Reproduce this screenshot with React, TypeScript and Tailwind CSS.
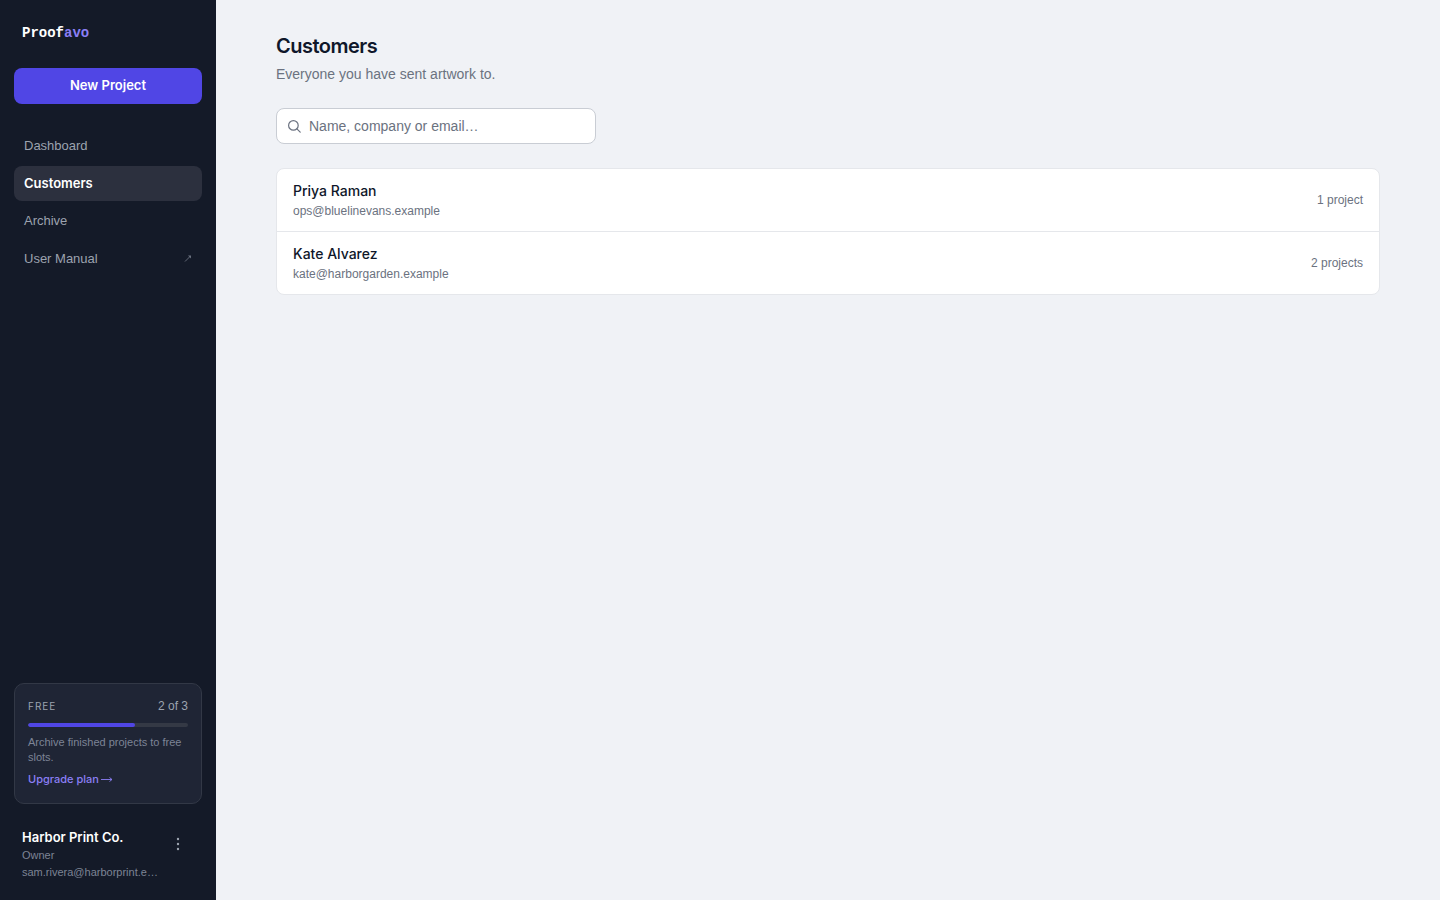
import { useState } from "react";
import clsx from "clsx";

const navItems = [
    { label: "Dashboard", href: "#dashboard" },
    { label: "Customers", href: "#customers", active: true },
    { label: "Archive", href: "#archive" },
    { label: "User Manual", href: "#manual", external: true },
];

const customers = [
    { name: "Priya Raman", email: "ops@bluelinevans.example", projects: 1 },
    { name: "Kate Alvarez", email: "kate@harborgarden.example", projects: 2 },
];

// body copy is Liberation Sans, anything emphasised is Inter
function Sidebar() {
    const used = 2;
    const limit = 3;

    return (
        <aside className="sticky top-0 flex h-screen w-[216px] shrink-0 flex-col bg-[#141a28] px-[14px] pt-5 pb-[19px]">
            <a
                href="#home"
                className="px-2 font-['Liberation_Mono',monospace] text-sm leading-[26px] font-bold text-white"
            >
                Proof<span className="text-[#8b7ff5]">avo</span>
            </a>

            <button
                type="button"
                className="mt-[22px] h-9 rounded-lg bg-[#5046e5] font-[Inter,sans-serif] text-[13px] font-semibold text-white"
            >
                New Project
            </button>

            <nav className="mt-6 flex flex-col gap-0.5">
                {navItems.map((item) => (
                    <a
                        key={item.label}
                        href={item.href}
                        className={clsx(
                            "flex items-center justify-between rounded-lg px-2.5 py-2 text-[13px] leading-normal",
                            item.active
                                ? "bg-[#2c303e] font-[Inter,sans-serif] font-semibold text-white"
                                : "text-[#9ca3af]"
                        )}
                    >
                        {item.label}
                        {item.external && (
                            <svg
                                className="size-2 text-[#6b7280]"
                                viewBox="0 0 8 8"
                                fill="none"
                                stroke="currentColor"
                                aria-hidden="true"
                            >
                                <path d="M1 7.5 6.5 2" strokeWidth="0.9" />
                                <path d="M4 1.5h3v3z" fill="currentColor" stroke="none" />
                            </svg>
                        )}
                    </a>
                ))}
            </nav>

            <section className="mt-auto rounded-[10px] border border-[#323846] bg-[#1f2535] px-[13px] pt-3 pb-4">
                <div className="flex items-center justify-between leading-5 text-[#9ca3af]">
                    <span className="font-[Inter,sans-serif] text-[10px] tracking-widest uppercase">Free</span>
                    <span className="text-xs">
                        {used} of {limit}
                    </span>
                </div>
                <div className="mt-[7px] h-1 overflow-hidden rounded-full bg-[#343945]">
                    <div
                        className="h-full rounded-full bg-[#5046e5]"
                        style={{ width: `${(used / limit) * 100}%` }}
                    />
                </div>
                <p className="mt-2 text-[11px] leading-[15px] text-[#7d8495]">
                    Archive finished projects to free slots.
                </p>
                <a
                    href="#upgrade"
                    className="mt-1.5 flex items-center gap-0.5 font-[Inter,sans-serif] text-[11px] leading-4 font-medium text-[#8b7ff5]"
                >
                    Upgrade plan
                    <svg className="h-2 w-3" viewBox="0 0 12 8" fill="none" stroke="currentColor" aria-hidden="true">
                        <path d="M0 4.5h11M8.5 2.5l2.5 2-2.5 2" strokeWidth="0.9" />
                    </svg>
                </a>
            </section>

            <div className="mt-[23px] flex items-start px-2">
                <div className="w-[132px] whitespace-nowrap">
                    <p className="font-[Inter,sans-serif] text-[13px] leading-5 font-semibold text-white">
                        Harbor Print Co.
                    </p>
                    <p className="text-[11px] leading-[17px] text-[#7d8495]">Owner</p>
                    <p className="text-[11px] leading-[17px] text-[#7d8495]">sam.rivera@harborprint.e…</p>
                </div>
                <button type="button" aria-label="Account menu" className="ml-3 mt-[5px] p-1 text-[#9ca3af]">
                    <svg className="size-4" viewBox="0 0 16 16" fill="currentColor">
                        <circle cx="8" cy="3" r="1.2" />
                        <circle cx="8" cy="8" r="1.2" />
                        <circle cx="8" cy="13" r="1.2" />
                    </svg>
                </button>
            </div>
        </aside>
    );
}

export default function App() {
    const [query, setQuery] = useState("");

    const q = query.trim().toLowerCase();
    const rows = customers.filter((c) => `${c.name} ${c.email}`.toLowerCase().includes(q));

    return (
        <div className="flex min-h-screen bg-[#f0f2f6] font-['Liberation_Sans',sans-serif]">
            <Sidebar />

            <main className="min-w-0 flex-1 px-[60px] py-8">
                <h1 className="font-[Inter,sans-serif] text-xl leading-7 font-semibold tracking-tight text-[#0f172a]">
                    Customers
                </h1>
                <p className="mt-1 text-sm text-[#6b7280]">Everyone you have sent artwork to.</p>

                <div className="relative mt-6 w-80 max-w-full">
                    <svg
                        className="pointer-events-none absolute top-[11px] left-[11px] size-[14px] text-[#6b7280]"
                        viewBox="0 0 14 14"
                        fill="none"
                        stroke="currentColor"
                        strokeWidth="1.2"
                        strokeLinecap="round"
                        aria-hidden="true"
                    >
                        <circle cx="6.4" cy="6.4" r="4.8" />
                        <path d="m9.9 9.9 3.3 3.3" />
                    </svg>
                    <input
                        type="search"
                        aria-label="Search customers"
                        value={query}
                        onChange={(e) => setQuery(e.target.value)}
                        placeholder="Name, company or email…"
                        className="h-9 w-full rounded-lg border border-[#c9cdd4] bg-white pr-3 pl-8 text-sm text-[#0f172a] placeholder:text-[#6b7280]"
                    />
                </div>

                <ul className="mt-6 divide-y divide-[#e5e7eb] rounded-lg border border-[#e5e7eb] bg-white">
                    {rows.map((c) => (
                        <li key={c.email} className="flex items-center justify-between px-4 py-3">
                            <div>
                                <p className="font-[Inter,sans-serif] text-sm leading-5 font-medium text-[#0f172a]">
                                    {c.name}
                                </p>
                                <p className="mt-0.5 text-xs text-[#6b7280]">{c.email}</p>
                            </div>
                            <span className="text-xs text-[#6b7280]">
                                {c.projects} {c.projects === 1 ? "project" : "projects"}
                            </span>
                        </li>
                    ))}
                </ul>
            </main>
        </div>
    );
}
